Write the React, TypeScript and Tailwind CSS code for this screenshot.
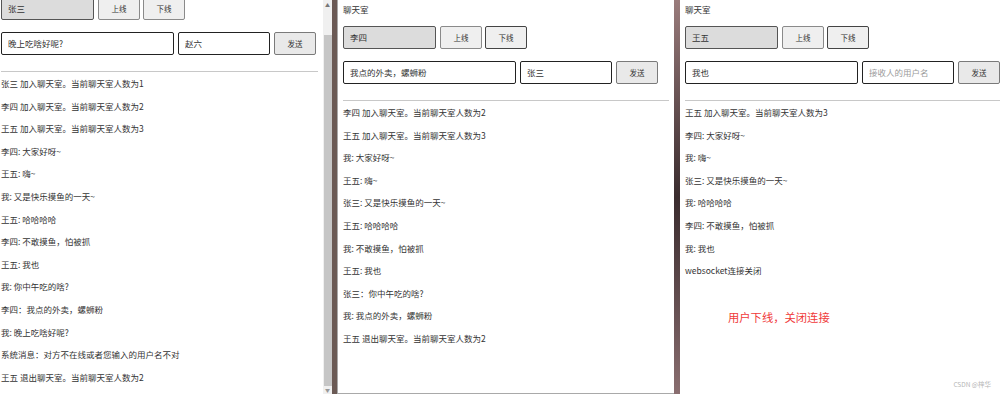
import type { ReactNode } from 'react';

type PanelProps = {
  name: string;
  message: string;
  receiver: string;
  messages: string[];
  darkOffline?: boolean;
  scrolled?: boolean;
  children?: ReactNode;
};

const font = { fontFamily: '"Noto Sans CJK SC", "Noto Sans", sans-serif' };

function ChatPanel({ name, message, receiver, messages, darkOffline, scrolled, children }: PanelProps) {
  return (
    <div className={scrolled ? '-mt-[29px]' : ''}>
      <div className="h-[18px] text-[8.5px] leading-[18px] text-[#333]">聊天室</div>

      {/* login row */}
      <div className="mt-[8px] flex h-[23px] items-stretch">
        <input
          readOnly
          value={name}
          className="w-[93px] rounded-[2px] border-[1.5px] border-[#555] bg-[#dcdcdc] px-[6px] text-[8.5px] text-[#333] outline-none"
        />
        <button className="ml-[4px] w-[42px] rounded-[2px] border border-[#8a8a8a] bg-[#efefef] text-[7.5px] text-[#333]">
          上线
        </button>
        <button
          className={`ml-[3px] w-[42px] rounded-[2px] border bg-[#efefef] text-[7.5px] text-[#333] ${
            darkOffline ? 'border-[#444]' : 'border-[#8a8a8a]'
          }`}
        >
          下线
        </button>
      </div>

      {/* send row */}
      <div className="mt-[12px] flex h-[23px] items-stretch">
        <input
          readOnly
          value={message}
          className="w-[173px] rounded-[2px] border-[1.5px] border-[#222] bg-white px-[6px] text-[8.5px] text-[#333] outline-none"
        />
        <input
          readOnly
          value={receiver}
          placeholder="接收人的用户名"
          className="ml-[4px] w-[92px] rounded-[2px] border-[1.5px] border-[#222] bg-white px-[6px] text-[8.5px] text-[#333] outline-none placeholder:text-[#9a9a9a]"
        />
        <button className="ml-[4px] w-[42px] rounded-[2px] border border-[#7a7a7a] bg-[#e9e9e9] text-[7.5px] text-[#333]">
          发送
        </button>
      </div>

      <div className="mt-[16px] h-px bg-[#c8c8c8]" />

      <div className="text-[8.5px] text-[#333]">
        {messages.map((m, i) => (
          <div key={i} className="h-[22.6px] leading-[22.6px] whitespace-pre">
            {m}
          </div>
        ))}
      </div>
      {children}
    </div>
  );
}

const first = [
  '张三 加入聊天室。当前聊天室人数为1',
  '李四 加入聊天室。当前聊天室人数为2',
  '王五 加入聊天室。当前聊天室人数为3',
  '李四: 大家好呀~',
  '王五: 嗨~',
  '我: 又是快乐摸鱼的一天~',
  '王五: 哈哈哈哈',
  '李四: 不敢摸鱼，怕被抓',
  '王五: 我也',
  '我: 你中午吃的啥?',
  '李四：我点的外卖，螺蛳粉',
  '我: 晚上吃啥好呢?',
  '系统消息：对方不在线或者您输入的用户名不对',
  '王五 退出聊天室。当前聊天室人数为2',
];

const second = [
  '李四 加入聊天室。当前聊天室人数为2',
  '王五 加入聊天室。当前聊天室人数为3',
  '我: 大家好呀~',
  '王五: 嗨~',
  '张三: 又是快乐摸鱼的一天~',
  '王五: 哈哈哈哈',
  '我: 不敢摸鱼，怕被抓',
  '王五: 我也',
  '张三：你中午吃的啥?',
  '我: 我点的外卖，螺蛳粉',
  '王五 退出聊天室。当前聊天室人数为2',
];

const third = [
  '王五 加入聊天室。当前聊天室人数为3',
  '李四: 大家好呀~',
  '我: 嗨~',
  '张三: 又是快乐摸鱼的一天~',
  '我: 哈哈哈哈',
  '李四: 不敢摸鱼，怕被抓',
  '我: 我也',
  'websocket连接关闭',
];

export default function App() {
  return (
    <div className="relative flex h-[394px] w-[1000px] overflow-hidden bg-white" style={font}>
      {/* window 1, scrolled down */}
      <div className="h-full w-[323px] overflow-hidden bg-white pl-[1px] pr-[5px]">
        <ChatPanel name="张三" message="晚上吃啥好呢?" receiver="赵六" messages={first} scrolled />
      </div>

      {/* scrollbar */}
      <div className="flex h-full w-[9px] flex-col items-center bg-[#f0f0f0]">
        <div className="mt-[2px] text-[5px] leading-[6px] text-[#777]">▲</div>
        <div className="mt-[27px] w-[8px] flex-1 bg-[#c6c6c6]" />
        <div className="mb-[1px] mt-[1px] text-[5px] leading-[6px] text-[#999]">▼</div>
      </div>
      <div className="h-full w-[5px] bg-[#6b5a55]" />

      {/* window 2 */}
      <div className="h-full w-[337px] border-b border-l border-[#a9a9a9] bg-white px-[5px]">
        <ChatPanel name="李四" message="我点的外卖，螺蛳粉" receiver="张三" messages={second} darkOffline />
      </div>

      <div className="h-full w-[6px] bg-gradient-to-b from-[#9a7c7c] via-[#3a2c2e] to-[#8a6e70]" />

      {/* window 3 */}
      <div className="h-full flex-1 bg-white pl-[5px]">
        <ChatPanel name="王五" message="我也" receiver="" messages={third} darkOffline>
          <div className="mt-[27px] pl-[43px] text-[11.3px] leading-[16px] text-[#f03a3a]">用户下线，关闭连接</div>
        </ChatPanel>
      </div>

      <div className="absolute bottom-[4px] right-[9px] text-[6.5px] text-[#b5b5b5]">CSDN @梓华</div>
    </div>
  );
}
